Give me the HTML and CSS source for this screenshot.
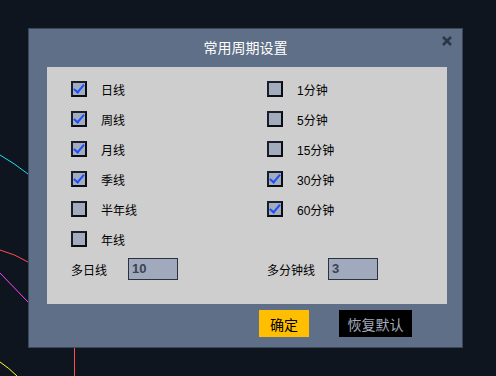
FILE: index.html
```html
<!DOCTYPE html>
<html lang="zh-CN">
  <head>
    <meta charset="UTF-8" />
    <title>常用周期设置</title>
    <link rel="stylesheet" href="styles.css">
  </head>
  <body>
    <!-- 背景行情曲线 -->
    <svg class="chart" width="496" height="376" viewBox="0 0 496 376">
      <path d="M0 155 Q14 163 28 174" stroke="#19e0f0" fill="none" />
      <path d="M0 250 Q15 254 28 262" stroke="#ff4d4d" fill="none" />
      <path d="M0 273 L28 302" stroke="#ff44ff" fill="none" />
      <path d="M0 362 Q9 368 17 376" stroke="#ffff33" fill="none" />
      <path d="M74.5 348 L74.5 376" stroke="#ff4d4d" fill="none" />
    </svg>

    <div class="dialog">
      <div class="dialog-head">
        <span class="dialog-title">常用周期设置</span>
        <svg class="close" width="10" height="10" viewBox="0 0 10 10">
          <path d="M1 1 L9 9 M9 1 L1 9" stroke="#2c3646" stroke-width="2.6" />
        </svg>
      </div>

      <div class="panel">
        <div class="col">
          <label class="opt"><span class="box on"></span>日线</label>
          <label class="opt"><span class="box on"></span>周线</label>
          <label class="opt"><span class="box on"></span>月线</label>
          <label class="opt"><span class="box on"></span>季线</label>
          <label class="opt"><span class="box"></span>半年线</label>
          <label class="opt"><span class="box"></span>年线</label>
          <div class="num-row">
            <span class="num-label">多日线</span>
            <span class="num-input">10</span>
          </div>
        </div>
        <div class="col">
          <label class="opt"><span class="box"></span>1分钟</label>
          <label class="opt"><span class="box"></span>5分钟</label>
          <label class="opt"><span class="box"></span>15分钟</label>
          <label class="opt"><span class="box on"></span>30分钟</label>
          <label class="opt"><span class="box on"></span>60分钟</label>
          <div class="opt"></div>
          <div class="num-row">
            <span class="num-label wide">多分钟线</span>
            <span class="num-input">3</span>
          </div>
        </div>
      </div>

      <div class="actions">
        <button class="btn ok">确定</button>
        <button class="btn reset">恢复默认</button>
      </div>
    </div>
  </body>
</html>
```

FILE: styles.css
```css
/* 页面 */
body {
  margin: 0;
  background: #0f151f;
  font-family: "Liberation Sans", "Noto Sans CJK SC", sans-serif;
  width: 496px;
  height: 376px;
  overflow: hidden;
  position: relative;
}

.chart {
  position: absolute;
  left: 0;
  top: 0;
}

/* 对话框 */
.dialog {
  position: absolute;
  left: 28px;
  top: 28px;
  width: 433px;
  height: 318px;
  background: #5f6f87;
  border: 1px solid #3b4658;
  display: flex;
  flex-direction: column;
}

.dialog-head {
  height: 38px;
  display: flex;
  align-items: center;
  justify-content: center;
  position: relative;
}

.dialog-title {
  color: #fff;
  font-size: 14px;
  margin-top: -2px;
}

.close {
  position: absolute;
  right: 10px;
  top: 7px;
}

/* 内容区 */
.panel {
  margin-left: 18px;
  width: 376px;
  height: 230px;
  background: #cecece;
  padding: 7px 0 0 24px;
  display: grid;
  grid-template-columns: 196px 1fr;
}

.opt {
  height: 30px;
  display: flex;
  align-items: center;
  gap: 14px;
  font-size: 12px;
  color: #000;
}

.box {
  width: 12px;
  height: 12px;
  background: #a2acbd;
  border: 2px solid #1a1f29;
  border-bottom-color: #0a0d12;
  border-right-color: #0a0d12;
  position: relative;
}

.box.on::after {
  content: "";
  position: absolute;
  left: 3px;
  top: -1px;
  width: 4px;
  height: 9px;
  border: solid #1d4fff;
  border-width: 0 2px 2px 0;
  transform: rotate(40deg);
}

.num-row {
  height: 30px;
  display: flex;
  align-items: center;
  font-size: 12px;
  color: #000;
}

.num-label {
  width: 57px;
}

.num-label.wide {
  width: 61px;
}

.num-input {
  width: 45px;
  height: 20px;
  line-height: 20px;
  padding-left: 3px;
  background: #a0aabc;
  border: 1px solid #2a3140;
  color: #3a4354;
  font-weight: bold;
  font-size: 13px;
}

/* 按钮 */
.actions {
  display: flex;
  justify-content: flex-end;
  gap: 30px;
  padding: 6px 50px 0 0;
}

.btn {
  height: 27px;
  border: none;
  padding: 0;
  font-family: "Noto Sans CJK SC", sans-serif;
  font-size: 14px;
}

.ok {
  width: 50px;
  background: #ffbf00;
  color: #000;
}

.reset {
  width: 73px;
  background: #000;
  color: #a3abba;
}
```
